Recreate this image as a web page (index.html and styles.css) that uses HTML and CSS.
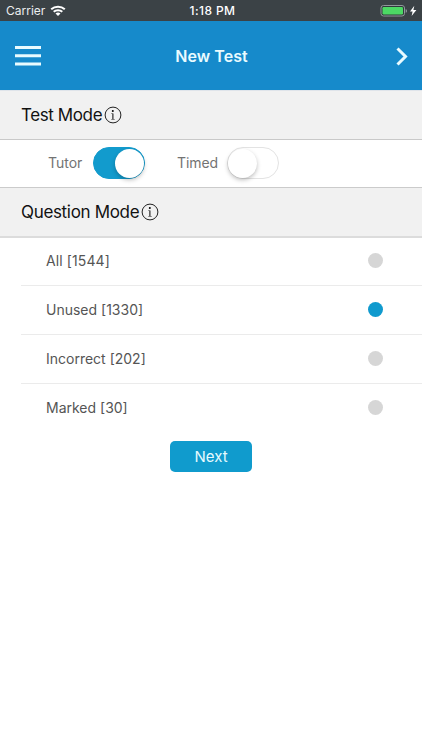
FILE: index.html
```html
<!DOCTYPE html>
<html lang="en">
<head>
<meta charset="utf-8">
<title>New Test</title>
<link rel="stylesheet" href="styles.css">
</head>
<body>
<div class="status">
  <div class="status-left"><span class="carrier">Carrier</span>
    <svg class="wifi" width="16" height="12" viewBox="0 0 16 12" fill="none" stroke="#fff" stroke-width="2"><path d="M1.2 4.3C5 .8 11 .8 14.8 4.3M3.7 6.8c2.4-2.2 6.2-2.2 8.6 0"/><path d="M8 11 5.5 8.5q2.5-2 5 0z" fill="#fff" stroke="none"/></svg>
  </div>
  <span class="time">1:18 PM</span>
  <div class="status-right">
    <svg width="37" height="12" viewBox="0 0 37 12"><rect x="1" y=".5" width="23.5" height="10.5" rx="2.5" fill="#30383b" stroke="#91989b"/><rect x="2.5" y="2" width="20.5" height="7.5" rx="1.2" fill="#4cd964"/><path d="M25.7 4v3.8q1.3-.5 1.3-1.9T25.7 4z" fill="#91989b"/><path d="M34.3.7 30 6.5h2.6l-1 4.5 4.8-6h-3z" fill="#fff"/></svg>
  </div>
</div>
<header class="header">
  <svg class="menu" width="26" height="20" viewBox="0 0 26 20" fill="#e9fbff"><path d="M0 0h26v3H0zM0 8.2h26v3H0zM0 16.4h26v3H0z"/></svg>
  <h1>New Test</h1>
  <svg class="chevron" width="12" height="19" viewBox="0 0 12 19" fill="none" stroke="#e9fbff" stroke-width="3"><path d="m1.5 1.5 8 8-8 8"/></svg>
</header>
<h2 class="section"><span class="test-mode">Test Mode</span><svg class="info" width="18" height="18" viewBox="0 0 18 18"><circle cx="9" cy="9" r="7.9" fill="none" stroke="#222"/><circle cx="8.8" cy="5.1" r="1"/><path d="M7.3 7.4h2.1v5.5h1.3v.6H7.3v-.6h1.1V8H7.3z"/></svg></h2>
<div class="toggles">
  <span class="label tutor">Tutor</span><span class="switch on"><i></i></span>
  <span class="label timed">Timed</span><span class="switch"><i></i></span>
</div>
<h2 class="section question"><span class="question-mode">Question Mode</span><svg class="info" width="18" height="18" viewBox="0 0 18 18"><circle cx="9" cy="9" r="7.9" fill="none" stroke="#222"/><circle cx="8.8" cy="5.1" r="1"/><path d="M7.3 7.4h2.1v5.5h1.3v.6H7.3v-.6h1.1V8H7.3z"/></svg></h2>
<ul class="list">
  <li><span class="all">All [1544]</span><b></b></li>
  <li><span>Unused [1330]</span><b class="selected"></b></li>
  <li><span>Incorrect [202]</span><b></b></li>
  <li><span>Marked [30]</span><b></b></li>
</ul>
<button class="next">Next</button>
</body>
</html>
```
FILE: styles.css
```css
* { box-sizing: border-box; }
body { margin: 0; background: #fff; font-family: Inter, "Liberation Sans", sans-serif; }
svg { display: block; flex: none; }
.status { height: 21px; background: #3b4246; color: #fff; display: grid; grid-template-columns: 1fr auto 1fr; align-items: center; font-size: 12px; padding: 0 5px 0 6px; }
.status-left { display: flex; align-items: center; gap: 5px; color: #eceeef; }
.time { font-weight: 500; letter-spacing: .4px; padding-left: 2px; }
.status-right { display: flex; justify-content: flex-end; }
.header { height: 69px; background: #168acb; display: grid; grid-template-columns: 1fr auto 1fr; align-items: center; padding: 1px 14px 0 15px; }
.header h1 { margin: 0; color: #e9fbff; font-size: 16px; font-weight: 600; letter-spacing: .05px; }
.chevron { justify-self: end; }
.section { height: 50px; margin: 0; padding: 0 0 0 21px; display: flex; align-items: center; background: #f1f1f1; border-top: 1px solid #dfe4ea; border-bottom: 1px solid #c9c9c9; font-size: 17px; font-weight: 400; color: #111; }
.test-mode { letter-spacing: -.4px; }
.question-mode { letter-spacing: -.33px; }
.info { margin-left: 1.5px; }
.toggles { height: 47px; display: flex; align-items: center; padding: 0 0 1px 48px; }
.label { color: #737373; font-size: 14px; padding-bottom: 1px; }
.tutor { width: 45px; }
.timed { width: 50px; margin-left: 32px; letter-spacing: -.1px; }
.switch { width: 52px; height: 32px; border-radius: 16px; border: 1.5px solid #e3e3e3; background: #fff; display: flex; align-items: center; }
.switch i { width: 29px; height: 29px; border-radius: 50%; background: #fff; box-shadow: 0 2px 4px rgba(0,0,0,.25); }
.switch.on { background: #129bcd; border-color: #129bcd; justify-content: flex-end; }
.question { height: 51px; border-top-color: #cbcbcb; border-bottom: 2px solid #dcdcdc; }
.list { list-style: none; margin: -1px 0 0 21px; padding: 0; }
.list li { height: 49px; display: flex; align-items: center; justify-content: space-between; padding: 0 39px 1px 25px; border-bottom: 1px solid #ebebeb; color: #555; font-size: 14px; }
.all { letter-spacing: .1px; }
.list li:last-child { height: 48px; border-bottom: 0; padding-bottom: 2px; }
.list b { width: 15px; height: 15px; border-radius: 50%; background: #d6d6d6; }
.list b.selected { background: #109ace; }
.next { display: block; width: 82px; height: 31px; margin: 9px auto 0 170px; padding: 0; border: 0; border-radius: 5px; background: #109bcd; color: #e6faff; font: 400 15px Inter, "Liberation Sans", sans-serif; }
```
